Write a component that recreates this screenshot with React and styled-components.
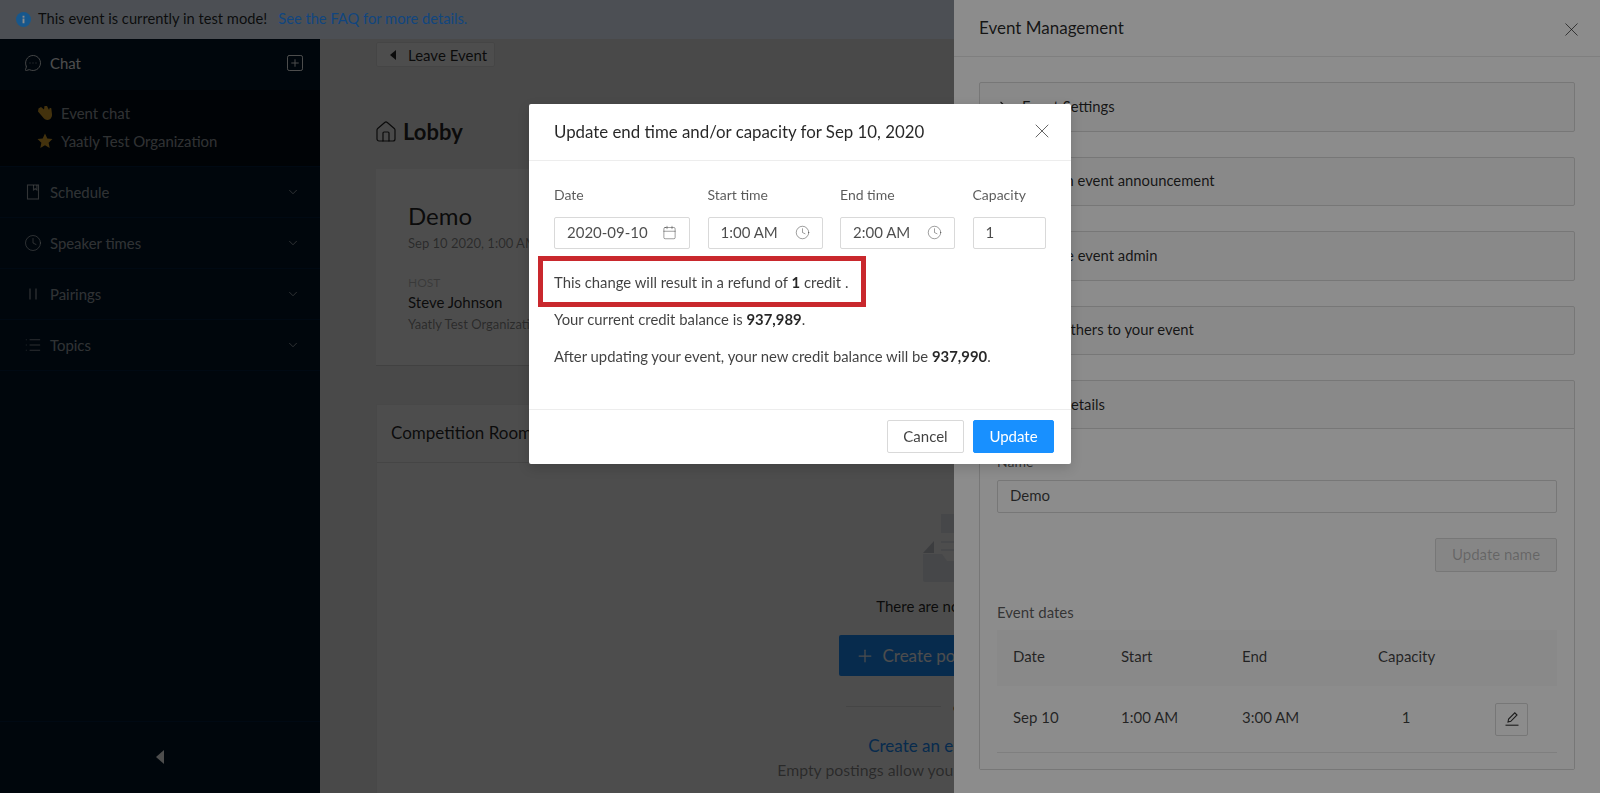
import styled, { createGlobalStyle } from "styled-components";
import {
  Calendar,
  ChevronDown,
  ChevronRight,
  Clock,
  House,
  List,
  MessageCircleMore,
  Plus,
  SquarePlus,
  X,
} from "lucide-react";

const GlobalStyle = createGlobalStyle`
  html, body {
    margin: 0;
    padding: 0;
    height: 100%;
    overflow: hidden;
    background: #fff;
    font-family: "Lato", "Open Sans", sans-serif;
    color: rgba(0, 0, 0, 0.85);
  }
  * {
    box-sizing: border-box;
  }
`;

const Page = styled.div`
  width: 1600px;
  height: 793px;
  display: flex;
  flex-direction: column;
  overflow: hidden;
`;

const AlertBar = styled.div`
  position: relative;
  z-index: 2;
  height: 39px;
  flex: none;
  display: flex;
  align-items: center;
  gap: 7px;
  padding: 0 0 3px 16px;
  background: #8a9199;
  font-size: 14.7px;
  color: rgba(0, 0, 0, 0.85);
  & > svg {
    margin-top: 3px;
  }
`;

const AlertLink = styled.span`
  margin-left: 4px;
  color: #1f7fe6;
`;

const Body = styled.div`
  flex: 1;
  display: flex;
  min-height: 0;
`;

const Sidebar = styled.aside`
  width: 320px;
  flex: none;
  display: flex;
  flex-direction: column;
  background: #001529;
  color: rgba(255, 255, 255, 0.65);
  font-size: 14.9px;
`;

const ChatHeader = styled.div`
  height: 51px;
  display: flex;
  align-items: center;
  justify-content: space-between;
  padding: 0 15px 3px 24px;
  color: #fff;
`;

const NavLabel = styled.span`
  display: flex;
  align-items: center;
  gap: 8px;
`;

const ChatList = styled.div`
  height: 77px;
  display: flex;
  flex-direction: column;
  gap: 8px;
  padding: 13px 0 0 37px;
  background: #000c17;
  border-bottom: 1px solid #002140;
`;

const ChatItem = styled.div`
  height: 20px;
  display: flex;
  align-items: center;
  gap: 8px;
`;

const NavRow = styled.div`
  height: 51px;
  display: flex;
  align-items: center;
  justify-content: space-between;
  padding: 0 20px 0 24px;
  border-bottom: 1px solid #002140;
`;

const SidebarFooter = styled.div`
  margin-top: auto;
  height: 72px;
  display: flex;
  align-items: center;
  justify-content: center;
  padding-bottom: 2px;
  border-top: 1px solid #002140;
`;

const Caret = styled.span`
  display: block;
  width: 0;
  height: 0;
  border-top: ${(p) => p.$size}px solid transparent;
  border-bottom: ${(p) => p.$size}px solid transparent;
  border-right: ${(p) => p.$size + 1}px solid ${(p) => p.$color};
`;

const Main = styled.main`
  flex: 1;
  min-width: 0;
  padding: 3px 57px 0 56px;
  background: #f4f4f4;
  overflow: hidden;
`;

const LeaveButton = styled.div`
  width: 119px;
  height: 25px;
  display: flex;
  align-items: center;
  gap: 12px;
  padding-left: 13px;
  background: #fff;
  border: 1px solid #e8e8e8;
  border-radius: 2px;
  font-size: 15px;
`;

const LobbyTitle = styled.h2`
  display: flex;
  align-items: center;
  gap: 5px;
  margin: 52px 0 24px -2px;
  height: 26px;
  font-size: 22px;
  font-weight: 700;
  line-height: 26px;
`;

const EventCard = styled.section`
  height: 197px;
  padding: 31px 32px;
  background: #fff;
  border-bottom: 1px solid #d9d9d9;
`;

const EventName = styled.div`
  font-size: 24px;
  line-height: 32px;
`;

const Meta = styled.div`
  font-size: ${(p) => p.$size || 13}px;
  line-height: ${(p) => p.$line || 18}px;
  color: ${(p) => p.$color || "rgba(0, 0, 0, 0.45)"};
  margin-top: ${(p) => p.$top || 0}px;
`;

const RoomsCard = styled.section`
  margin-top: 38px;
  height: 400px;
  background: #fff;
  border: 1px solid #f0f0f0;
`;

const RoomsHeader = styled.div`
  height: 58px;
  display: flex;
  align-items: center;
  padding: 0 0 2px 14px;
  font-size: 17px;
  border-bottom: 1px solid #e8e8e8;
`;

const EmptyState = styled.div`
  display: flex;
  flex-direction: column;
  align-items: center;
  padding-top: 43px;
`;

const EmptyText = styled.div`
  margin-top: 13px;
  font-size: 15px;
  line-height: 22px;
`;

const CreateButton = styled.div`
  margin-top: 18px;
  width: 242px;
  height: 41px;
  display: flex;
  align-items: center;
  gap: 8px;
  padding-left: 16px;
  background: #1890ff;
  color: #fff;
  border-radius: 2px;
  font-size: 17px;
  white-space: nowrap;
`;

const OrDivider = styled.div`
  margin-top: 20px;
  width: 228px;
  display: flex;
  align-items: center;
  gap: 12px;
  height: 20px;
  font-size: 14px;
  &::before,
  &::after {
    content: "";
    flex: 1;
    height: 1px;
    background: #e8e8e8;
  }
`;

const CreateLink = styled.div`
  margin-top: 19px;
  font-size: 17px;
  line-height: 22px;
  color: #1890ff;
`;

const Mask = styled.div`
  position: fixed;
  inset: 0;
  z-index: ${(p) => p.$z};
  background: rgba(0, 0, 0, 0.45);
`;

const Drawer = styled.aside`
  position: fixed;
  z-index: 3;
  top: 0;
  right: 0;
  bottom: 0;
  width: 646px;
  background: #fff;
  overflow: hidden;
`;

const DrawerHeader = styled.div`
  height: 57px;
  display: flex;
  align-items: center;
  justify-content: space-between;
  padding: 0 17px 2px 25px;
  font-size: 17px;
  border-bottom: 1px solid #e8e8e8;
  & > svg {
    margin-top: 4px;
  }
`;

const DrawerBody = styled.div`
  display: flex;
  flex-direction: column;
  gap: 25px;
  padding: 25px 25px 0;
`;

const Panel = styled.div`
  border: 1px solid #d9d9d9;
  border-radius: 2px;
  background: #fafafa;
`;

const PanelHeader = styled.div`
  height: ${(p) => (p.$open ? 48 : 47.5)}px;
  display: flex;
  align-items: center;
  gap: 13px;
  padding: 0 0 2px 16px;
  font-size: 14.8px;
  border-bottom: ${(p) => (p.$open ? "1px solid #d9d9d9" : "none")};
`;

const PanelContent = styled.div`
  height: 340px;
  padding: 23px 17px 0;
  background: #fff;
`;

const FieldLabel = styled.div`
  font-size: 14px;
  line-height: 20px;
  color: rgba(0, 0, 0, 0.65);
`;

const NameInput = styled.div`
  margin-top: 8px;
  height: 33px;
  display: flex;
  align-items: center;
  padding: 0 0 3px 12px;
  border: 1px solid #d9d9d9;
  border-radius: 2px;
  font-size: 15px;
  color: rgba(0, 0, 0, 0.75);
`;

const DisabledRow = styled.div`
  margin-top: 25px;
  display: flex;
  justify-content: flex-end;
`;

const DisabledButton = styled.div`
  width: 122px;
  height: 34px;
  display: flex;
  align-items: center;
  justify-content: center;
  padding-bottom: 3px;
  background: #f5f5f5;
  border: 1px solid #d9d9d9;
  border-radius: 2px;
  color: rgba(0, 0, 0, 0.25);
  font-size: 15px;
`;

const DatesTitle = styled(FieldLabel)`
  margin-top: 30px;
  font-size: 15px;
`;

const TableRow = styled.div`
  display: grid;
  grid-template-columns: 108px 121px 136px 56px 1fr;
  align-items: center;
  height: ${(p) => (p.$head ? 56 : 67)}px;
  margin-top: ${(p) => (p.$head ? 8 : 0)}px;
  padding-left: 16px;
  font-size: 15px;
  background: ${(p) => (p.$head ? "#fafafa" : "transparent")};
  border-bottom: ${(p) => (p.$head ? "none" : "1px solid #e8e8e8")};
  color: rgba(0, 0, 0, 0.75);
  & > span {
    margin-bottom: 4px;
  }
`;

const CenterCell = styled.span`
  text-align: center;
`;

const EditButton = styled.div`
  justify-self: start;
  margin-left: 61px;
  width: 33px;
  height: 33px;
  display: flex;
  align-items: center;
  justify-content: center;
  background: #fff;
  border: 1px solid #d9d9d9;
  border-radius: 2px;
`;

const Modal = styled.div`
  position: fixed;
  z-index: 5;
  top: 104px;
  left: 529px;
  width: 542px;
  height: 360px;
  display: flex;
  flex-direction: column;
  background: #fff;
  border-radius: 2px;
  box-shadow: 0 4px 12px rgba(0, 0, 0, 0.15);
`;

const ModalHeader = styled.div`
  height: 57px;
  flex: none;
  display: flex;
  align-items: center;
  justify-content: space-between;
  padding: 0 17px 2px 25px;
  font-size: 16.85px;
  border-bottom: 1px solid #ededed;
`;

const ModalBody = styled.div`
  flex: 1;
  padding: 24px 25px 0;
`;

const FieldGrid = styled.div`
  display: grid;
  grid-template-columns: 136px 115px 115px 73px;
  column-gap: 17.5px;
`;

const FieldColumn = styled.div`
  display: flex;
  flex-direction: column;
  gap: 12px;
`;

const InputBox = styled.div`
  height: 32px;
  display: flex;
  align-items: center;
  justify-content: space-between;
  padding: 0 12px 2px;
  border: 1px solid #d9d9d9;
  border-radius: 2px;
  font-size: 15px;
  color: rgba(0, 0, 0, 0.7);
`;

const RefundNotice = styled.div`
  width: 328px;
  height: 51px;
  margin: 7px 0 0 -16px;
  display: flex;
  align-items: center;
  padding-left: 11px;
  border: 5px solid #c9282d;
  font-size: 14.85px;
  color: rgba(0, 0, 0, 0.75);
`;

const Balance = styled.p`
  margin: ${(p) => p.$top}px 0 0;
  font-size: 14.85px;
  line-height: 22px;
  color: rgba(0, 0, 0, 0.75);
`;

const Strong = styled.b`
  font-weight: 700;
  color: rgba(0, 0, 0, 0.85);
`;

const ModalFooter = styled.div`
  height: 55px;
  flex: none;
  display: flex;
  justify-content: flex-end;
  align-items: center;
  gap: 9px;
  padding: 0 17px 1px 0;
  border-top: 1px solid #ededed;
`;

const FooterButton = styled.div`
  width: ${(p) => p.$width}px;
  height: 33px;
  display: flex;
  align-items: center;
  justify-content: center;
  padding-bottom: 2px;
  border-radius: 2px;
  font-size: 15px;
  border: 1px solid ${(p) => (p.$primary ? "#1890ff" : "#d9d9d9")};
  background: ${(p) => (p.$primary ? "#1890ff" : "#fff")};
  color: ${(p) => (p.$primary ? "#fff" : "rgba(0, 0, 0, 0.75)")};
`;

const InfoIcon = () => (
  <svg width="15" height="15" viewBox="0 0 16 16">
    <circle cx="8" cy="8" r="8" fill="#2a9fff" />
    <rect x="7" y="7" width="2" height="5" fill="#fff" />
    <rect x="7" y="4" width="2" height="2" fill="#fff" />
  </svg>
);

const WaveIcon = () => (
  <svg width="16" height="16" viewBox="0 0 16 16">
    <path
      d="M1.5 3.5 4 2l3 2.5L7.5 1 10 1l2 4 .8-2.3 1.5.6.7 6c.3 3-1.7 5.7-4.3 5.7-2.2 0-3.6-1.3-5-3L1 6.5z"
      fill="#e0a82e"
    />
  </svg>
);

const StarIcon = () => (
  <svg width="16" height="16" viewBox="0 0 16 16">
    <path d="M8 .5l2.3 5 5.2.6-3.9 3.6 1.1 5.3L8 12.3 3.3 15l1.1-5.3L.5 6.1l5.2-.6z" fill="#e0a82e" />
  </svg>
);

const BookIcon = () => (
  <svg width="18" height="18" viewBox="-1 -1 18 18" fill="none" stroke="currentColor" strokeWidth="1.1">
    <rect x="2.5" y="1" width="11" height="14" />
    <path d="M8.5 1v5l1.7-1.3L11.9 6V1" />
  </svg>
);

const PauseIcon = () => (
  <svg width="18" height="18" viewBox="-1 -1 18 18" fill="none" stroke="currentColor" strokeWidth="1.2">
    <path d="M5 2.5v11M11 2.5v11" />
  </svg>
);

const ClockIcon = () => <Clock size={18} strokeWidth={1.2} />;
const ListIcon = () => <List size={18} strokeWidth={1.2} />;

const EditIcon = () => (
  <svg width="16" height="16" viewBox="0 0 16 16" fill="none" stroke="rgba(0,0,0,0.8)" strokeWidth="1.1">
    <path d="M4 11l.6-3L10.8 1.8l2.2 2.2L6.8 10.3z" />
    <path d="M1.5 14.2h13" />
  </svg>
);

const EmptyBox = () => (
  <svg width="76" height="76" viewBox="0 0 76 76">
    <rect x="13" y="0" width="50" height="52" rx="2" fill="#ffffff" />
    <rect x="19" y="8" width="38" height="19" fill="#e9ecf2" />
    <path d="M19 36h38M19 44h38" stroke="#e9ecf2" strokeWidth="2" />
    <path d="M1 47 12 35v12z" fill="#c8ccd4" />
    <path d="M1 48h19l5 7h26l5-7h19v26a2 2 0 0 1-2 2H3a2 2 0 0 1-2-2z" fill="#e9ecf2" />
  </svg>
);

const navItems = [
  { label: "Schedule", Icon: BookIcon },
  { label: "Speaker times", Icon: ClockIcon },
  { label: "Pairings", Icon: PauseIcon },
  { label: "Topics", Icon: ListIcon },
];

const panels = [
  "Event Settings",
  "Send an event announcement",
  "Manage event admin",
  "Invite others to your event",
];

const fields = [
  { label: "Date", value: "2020-09-10", Icon: Calendar },
  { label: "Start time", value: "1:00 AM", Icon: Clock },
  { label: "End time", value: "2:00 AM", Icon: Clock },
  { label: "Capacity", value: "1" },
];

export default function App() {
  return (
    <>
      <GlobalStyle />
      <Page>
        <AlertBar>
          <InfoIcon />
          This event is currently in test mode!
          <AlertLink>See the FAQ for more details.</AlertLink>
        </AlertBar>
        <Body>
          <Sidebar>
            <ChatHeader>
              <NavLabel>
                <MessageCircleMore size={18} strokeWidth={1.2} />
                Chat
              </NavLabel>
              <SquarePlus size={20} strokeWidth={1.2} />
            </ChatHeader>
            <ChatList>
              <ChatItem>
                <WaveIcon />
                Event chat
              </ChatItem>
              <ChatItem>
                <StarIcon />
                Yaatly Test Organization
              </ChatItem>
            </ChatList>
            {navItems.map(({ label, Icon }) => (
              <NavRow key={label}>
                <NavLabel>
                  <Icon />
                  {label}
                </NavLabel>
                <ChevronDown size={14} strokeWidth={1.6} />
              </NavRow>
            ))}
            <SidebarFooter>
              <Caret $size={7} $color="#fff" />
            </SidebarFooter>
          </Sidebar>
          <Main>
            <LeaveButton>
              <Caret $size={5} $color="rgba(0,0,0,0.85)" />
              Leave Event
            </LeaveButton>
            <LobbyTitle>
              <House size={24} strokeWidth={1.2} />
              Lobby
            </LobbyTitle>
            <EventCard>
              <EventName>Demo</EventName>
              <Meta $top={2}>Sep 10 2020, 1:00 AM</Meta>
              <Meta $top={22} $size={12} $color="rgba(0, 0, 0, 0.25)">HOST</Meta>
              <Meta $size={15} $line={20} $color="rgba(0, 0, 0, 0.85)">Steve Johnson</Meta>
              <Meta $top={3}>Yaatly Test Organization</Meta>
            </EventCard>
            <RoomsCard>
              <RoomsHeader>Competition Rooms</RoomsHeader>
              <EmptyState>
                <EmptyBox />
                <EmptyText>There are no postings yet</EmptyText>
                <CreateButton>
                  <Plus size={20} strokeWidth={1.5} />
                  Create posting
                </CreateButton>
                <OrDivider>or</OrDivider>
                <CreateLink>Create an empty posting</CreateLink>
                <Meta $size={15.8} $line={22} $top={2}>
                  Empty postings allow you to fill in the details later on
                </Meta>
              </EmptyState>
            </RoomsCard>
          </Main>
        </Body>
      </Page>
      <Mask $z={1} />
      <Drawer>
        <DrawerHeader>
          Event Management
          <X size={23} strokeWidth={1} color="rgba(0,0,0,0.65)" />
        </DrawerHeader>
        <DrawerBody>
          {panels.map((title) => (
            <Panel key={title}>
              <PanelHeader>
                <ChevronRight size={13} />
                {title}
              </PanelHeader>
            </Panel>
          ))}
          <Panel>
            <PanelHeader $open>
              <ChevronDown size={13} />
              Event details
            </PanelHeader>
            <PanelContent>
              <FieldLabel>Name</FieldLabel>
              <NameInput>Demo</NameInput>
              <DisabledRow>
                <DisabledButton>Update name</DisabledButton>
              </DisabledRow>
              <DatesTitle>Event dates</DatesTitle>
              <TableRow $head>
                <span>Date</span>
                <span>Start</span>
                <span>End</span>
                <span>Capacity</span>
              </TableRow>
              <TableRow>
                <span>Sep 10</span>
                <span>1:00 AM</span>
                <span>3:00 AM</span>
                <CenterCell>1</CenterCell>
                <EditButton>
                  <EditIcon />
                </EditButton>
              </TableRow>
            </PanelContent>
          </Panel>
        </DrawerBody>
      </Drawer>
      <Mask $z={4} />
      <Modal>
        <ModalHeader>
          Update end time and/or capacity for Sep 10, 2020
          <X size={24} strokeWidth={1} color="rgba(0,0,0,0.6)" />
        </ModalHeader>
        <ModalBody>
          <FieldGrid>
            {fields.map(({ label, value, Icon }) => (
              <FieldColumn key={label}>
                <FieldLabel>{label}</FieldLabel>
                <InputBox>
                  {value}
                  {Icon && <Icon size={15} strokeWidth={1.1} color="rgba(0,0,0,0.55)" />}
                </InputBox>
              </FieldColumn>
            ))}
          </FieldGrid>
          <RefundNotice>
            <span>
              This change will result in a refund of <Strong>1</Strong> credit .
            </span>
          </RefundNotice>
          <Balance $top={1}>
            Your current credit balance is <Strong>937,989</Strong>.
          </Balance>
          <Balance $top={15}>
            After updating your event, your new credit balance will be <Strong>937,990</Strong>.
          </Balance>
        </ModalBody>
        <ModalFooter>
          <FooterButton $width={77}>Cancel</FooterButton>
          <FooterButton $width={81} $primary>Update</FooterButton>
        </ModalFooter>
      </Modal>
    </>
  );
}
